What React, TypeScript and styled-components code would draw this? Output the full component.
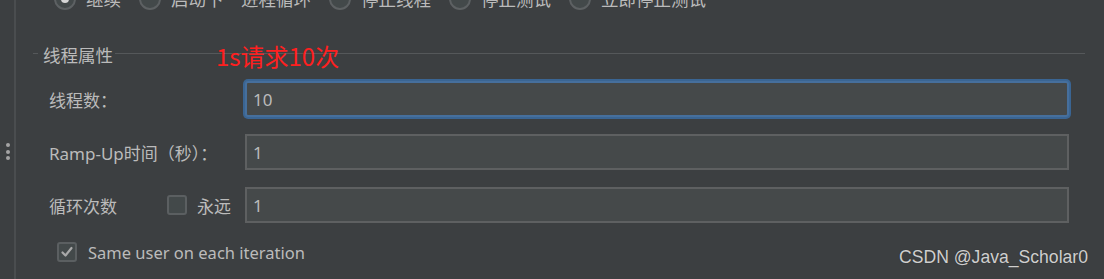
import React from "react";
import styled, { createGlobalStyle } from "styled-components";

const GlobalStyle = createGlobalStyle`
	html, body {
		margin: 0;
		padding: 0;
		background: #3c3f41;
	}
	body {
		font-family: "Noto Sans", "Noto Sans CJK SC", sans-serif;
	}
`;

const Page = styled.div`
	width: 1104px;
	height: 279px;
	display: flex;
	overflow: hidden;
	background: #3c3f41;
	color: #bbbbbb;
`;

const Gutter = styled.div`
	width: 12px;
	padding-left: 2px;
	padding-top: 143px;
	border-right: 2px solid #4a4d4f;
	display: flex;
	flex-direction: column;
	align-items: center;
	gap: 2.5px;
	flex-shrink: 0;
`;

const Dot = styled.span`
	width: 4px;
	height: 4px;
	border-radius: 50%;
	background: #a4a4a4;
`;

const Content = styled.div`
	position: relative;
	flex: 1;
	display: flex;
	flex-direction: column;
`;

const RadioRow = styled.div`
	display: flex;
	align-items: center;
	gap: 18px;
	height: 22px;
	margin-top: -12px;
	padding-left: 38px;
`;

const RadioItem = styled.label`
	display: flex;
	align-items: center;
	gap: 10px;
	font-size: 17.5px;
	line-height: 22px;
	white-space: nowrap;
`;

const RadioCircle = styled.span<{ $checked?: boolean }>`
	width: 22px;
	height: 22px;
	box-sizing: border-box;
	border-radius: 50%;
	border: 2px solid #5d6163;
	background: #43494a;
	display: flex;
	align-items: center;
	justify-content: center;

	&::after {
		content: "";
		width: 8px;
		height: 8px;
		border-radius: 50%;
		background: ${({ $checked }) => ($checked ? "#d6d6d6" : "transparent")};
	}
`;

const GroupHeader = styled.div`
	display: flex;
	align-items: center;
	margin-top: 33px;
	padding-left: 17px;
	padding-right: 19px;
	height: 24px;
`;

const HeaderLine = styled.span<{ $grow?: boolean }>`
	height: 1px;
	background: #55585a;
	width: 5px;
	flex: ${({ $grow }) => ($grow ? 1 : "none")};
	margin-top: -3px;
`;

const GroupTitle = styled.span`
	font-size: 17.5px;
	line-height: 24px;
	padding: 0 2px 0 5px;
`;

const Note = styled.span`
	position: absolute;
	left: 200px;
	top: 41px;
	color: #ff1f1f;
	font-family: "Noto Sans CJK SC", "Noto Sans", sans-serif;
	font-size: 24px;
	line-height: 30px;
	white-space: nowrap;
`;

const Form = styled.div`
	display: grid;
	grid-template-columns: 196px 824px;
	grid-auto-rows: 36px;
	row-gap: 17px;
	margin-top: 14px;
	padding-left: 33px;
`;

const LabelCell = styled.div`
	display: flex;
	align-items: center;
	justify-content: space-between;
	font-size: 17px;
	white-space: nowrap;
`;

const Inline = styled.label`
	display: flex;
	align-items: center;
	gap: 10px;
	padding-right: 14px;
	font-size: 17px;
`;

const Field = styled.input<{ $focused?: boolean }>`
	box-sizing: border-box;
	width: 100%;
	height: 36px;
	margin: 0;
	padding: 0 6px;
	background: #45494a;
	border: 2px solid ${({ $focused }) => ($focused ? "#466f9c" : "#5e6061")};
	border-radius: ${({ $focused }) => ($focused ? "3px" : "0")};
	box-shadow: ${({ $focused }) => ($focused ? "0 0 0 2px #3a6593" : "none")};
	color: #bbbbbb;
	font-family: "Noto Sans", sans-serif;
	font-size: 17px;
	outline: none;
`;

const Box = styled.span`
	width: 20px;
	height: 20px;
	box-sizing: border-box;
	border: 2px solid #5b5f61;
	border-radius: 3px;
	background: #43494a;
	display: flex;
	align-items: center;
	justify-content: center;
	flex-shrink: 0;
`;

const CheckRow = styled.label`
	display: flex;
	align-items: center;
	gap: 11px;
	margin-top: 19px;
	padding-left: 41px;
	height: 20px;
	font-size: 16.5px;
`;

const Watermark = styled.span`
	position: absolute;
	right: 16px;
	top: 247px;
	font-family: "Liberation Sans", Arial, sans-serif;
	font-size: 17.6px;
	color: #cfcfcf;
	text-shadow: 0 0 1px #2a2a2a;
	white-space: nowrap;
`;

const radios = ["继续", "启动下一进程循环", "停止线程", "停止测试", "立即停止测试"];

const CheckBox: React.FC<{ checked?: boolean }> = ({ checked }) => (
	<Box>
		{checked && (
			<svg width="14" height="14" viewBox="0 0 14 14">
				<polyline points="2.5,7.5 5.5,10.5 11.5,3" fill="none" stroke="#a8a8a8" strokeWidth="2.2" strokeLinecap="round" strokeLinejoin="round" />
			</svg>
		)}
	</Box>
);

const App: React.FC = () => {
	return (
		<>
			<GlobalStyle />
			<Page>
				<Gutter>
					<Dot />
					<Dot />
					<Dot />
				</Gutter>
				<Content>
					<RadioRow>
						{radios.map((r, i) => (
							<RadioItem key={r}>
								<RadioCircle $checked={i === 0} />
								{r}
							</RadioItem>
						))}
					</RadioRow>

					<GroupHeader>
						<HeaderLine />
						<GroupTitle>线程属性</GroupTitle>
						<HeaderLine $grow />
					</GroupHeader>
					<Note>1s请求10次</Note>

					<Form>
						<LabelCell>线程数：</LabelCell>
						<Field $focused defaultValue="10" />
						<LabelCell>Ramp-Up时间（秒）：</LabelCell>
						<Field defaultValue="1" />
						<LabelCell>
							循环次数
							<Inline>
								<CheckBox />
								永远
							</Inline>
						</LabelCell>
						<Field defaultValue="1" />
					</Form>

					<CheckRow>
						<CheckBox checked />
						Same user on each iteration
					</CheckRow>

					<Watermark>CSDN @Java_Scholar0</Watermark>
				</Content>
			</Page>
		</>
	);
};

export default App;
